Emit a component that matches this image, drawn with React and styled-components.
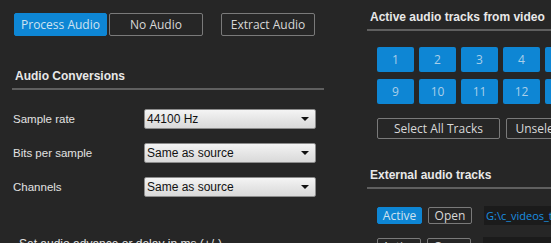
import styled, { createGlobalStyle } from 'styled-components';

const GlobalStyle = createGlobalStyle`
  html, body {
    margin: 0;
    padding: 0;
    background: #262626;
    overflow: hidden;
  }
`;

const tracks = [
  [1, 2, 3, 4, 5, 6, 7, 8],
  [9, 10, 11, 12, 13, 14, 15, 16],
];

const settings = [
  { label: 'Sample rate', value: '44100 Hz' },
  { label: 'Bits per sample', value: 'Same as source' },
  { label: 'Channels', value: 'Same as source' },
];

const App = () => {
  return (
    <Page>
      <GlobalStyle />
      <LeftPanel>
        <ModeBar>
          <ModeButton $active>Process Audio</ModeButton>
          <ModeButton>No Audio</ModeButton>
          <ModeButton $gap>Extract Audio</ModeButton>
        </ModeBar>
        <SectionTitle $top={33}>Audio Conversions</SectionTitle>
        <Settings>
          {settings.map((s) => (
            <SettingRow key={s.label}>
              <Label>{s.label}</Label>
              <Combo>
                <span>{s.value}</span>
                <Arrow />
              </Combo>
            </SettingRow>
          ))}
        </Settings>
        <DelayLabel>Set audio advance or delay in ms (+/-)</DelayLabel>
      </LeftPanel>
      <RightPanel>
        <SectionTitle $top={10}>Active audio tracks from video</SectionTitle>
        <TrackGrid>
          {tracks.map((row, i) => (
            <TrackRow key={i}>
              {row.map((n) => (
                <TrackButton key={n}>{n}</TrackButton>
              ))}
            </TrackRow>
          ))}
        </TrackGrid>
        <SelectBar>
          <OutlineButton $width={123}>Select All Tracks</OutlineButton>
          <OutlineButton $width={123}>Unselect All Tracks</OutlineButton>
        </SelectBar>
        <SectionTitle $top={29}>External audio tracks</SectionTitle>
        <ExternalList>
          <ExternalRow>
            <SmallButton $active>Active</SmallButton>
            <SmallButton>Open</SmallButton>
            <PathField>G:\c_videos_test\audio_track.ac3</PathField>
          </ExternalRow>
          <ExternalRow>
            <SmallButton>Active</SmallButton>
            <SmallButton>Open</SmallButton>
            <PathField />
          </ExternalRow>
        </ExternalList>
      </RightPanel>
    </Page>
  );
};

const Page = styled.div`
  display: flex;
  width: 551px;
  height: 243px;
  overflow: hidden;
  background: #262626;
  font-family: 'Liberation Sans', Arial, sans-serif;
`;

const LeftPanel = styled.section`
  width: 312px;
  flex: none;
  padding-left: 12px;
  margin-right: 43px;
`;

const RightPanel = styled.section`
  flex: 1;
  min-width: 0;
  display: flex;
  flex-direction: column;
`;

const ModeBar = styled.div`
  display: flex;
  padding: 13px 0 0 2px;
`;

const ModeButton = styled.button`
  width: 94px;
  height: 23px;
  margin-left: ${(p) => (p.$gap ? '18px' : '2px')};
  &:first-child {
    margin-left: 0;
    width: 93px;
  }
  box-sizing: border-box;
  border-radius: 2px;
  border: 1px solid ${(p) => (p.$active ? '#0e86d4' : '#7a7a7a')};
  background: ${(p) => (p.$active ? '#0e86d4' : 'transparent')};
  color: ${(p) => (p.$active ? '#cfe3f1' : '#d8d8d8')};
  font-family: 'Open Sans', 'Noto Sans', sans-serif;
  font-size: 12px;
  padding: 0;
  line-height: 21px;
`;

const SectionTitle = styled.h4`
  flex: none;
  margin: ${(p) => p.$top}px 0 0;
  padding: 0 0 5px 3px;
  font-size: 12px;
  line-height: 14px;
  font-weight: bold;
  color: #e8e8e8;
  border-bottom: 2px solid #5f5f5f;
  white-space: nowrap;
`;

const Settings = styled.div`
  display: flex;
  flex-direction: column;
  gap: 14px;
  margin-top: 19px;
`;

const SettingRow = styled.div`
  display: flex;
  align-items: center;
  height: 20px;
`;

const Label = styled.span`
  width: 131px;
  padding-left: 1px;
  font-family: 'Liberation Sans', Arial, sans-serif;
  font-size: 11.5px;
  color: #e2e2e2;
`;

const Combo = styled.div`
  width: 172px;
  height: 20px;
  box-sizing: border-box;
  display: flex;
  align-items: center;
  justify-content: space-between;
  padding: 0 6px 0 2px;
  border: 1px solid #8c8c8c;
  border-radius: 2px;
  background: linear-gradient(#f4f4f4, #e6e6e6 50%, #d9d9d9);
  font-family: 'Liberation Sans', Tahoma, sans-serif;
  font-size: 12px;
  color: #111;
`;

const Arrow = styled.span`
  width: 0;
  height: 0;
  border-left: 4px solid transparent;
  border-right: 4px solid transparent;
  border-top: 4px solid #111;
`;

const DelayLabel = styled.p`
  margin: 40px 0 0 7px;
  font-family: 'Liberation Sans', Arial, sans-serif;
  font-size: 12px;
  color: #e2e2e2;
  white-space: nowrap;
`;

const TrackGrid = styled.div`
  flex: none;
  display: flex;
  flex-direction: column;
  gap: 7px;
  margin: 16px 0 0 10px;
`;

const TrackRow = styled.div`
  display: flex;
  gap: 5px;
`;

const TrackButton = styled.button`
  flex: none;
  width: 37px;
  height: 25px;
  padding: 0;
  border: none;
  border-radius: 2px;
  background: #0e86d4;
  color: #a9cfe9;
  font-family: 'Open Sans', 'Noto Sans', sans-serif;
  font-size: 12px;
`;

const SelectBar = styled.div`
  flex: none;
  display: flex;
  gap: 6px;
  margin: 14px 0 0 10px;
`;

const OutlineButton = styled.button`
  flex: none;
  width: ${(p) => p.$width}px;
  height: 21px;
  padding: 0;
  box-sizing: border-box;
  border: 1px solid #7a7a7a;
  border-radius: 2px;
  background: transparent;
  color: #d8d8d8;
  font-family: 'Open Sans', 'Noto Sans', sans-serif;
  font-size: 12px;
  white-space: nowrap;
  overflow: hidden;
`;

const ExternalList = styled.div`
  flex: none;
  display: flex;
  flex-direction: column;
  gap: 12px;
  margin: 17px 0 0 10px;
`;

const ExternalRow = styled.div`
  display: flex;
  align-items: center;
  gap: 6px;
`;

const SmallButton = styled.button`
  flex: none;
  width: ${(p) => (p.$active ? '45px' : '44px')};
  height: 17px;
  padding: 0;
  box-sizing: border-box;
  border-radius: 2px;
  border: 1px solid ${(p) => (p.$active ? '#0e86d4' : '#7a7a7a')};
  background: ${(p) => (p.$active ? '#0e86d4' : 'transparent')};
  color: ${(p) => (p.$active ? '#cfe3f1' : '#d8d8d8')};
  font-family: 'Open Sans', 'Noto Sans', sans-serif;
  font-size: 12px;
  line-height: 15px;
`;

const PathField = styled.div`
  flex: 1;
  height: 19px;
  margin-left: 6px;
  padding-left: 2px;
  background: #1b1b1b;
  color: #1a8fe0;
  font-family: 'Open Sans', 'Noto Sans', sans-serif;
  font-size: 11px;
  line-height: 19px;
  white-space: nowrap;
  overflow: hidden;
`;

export default App;
